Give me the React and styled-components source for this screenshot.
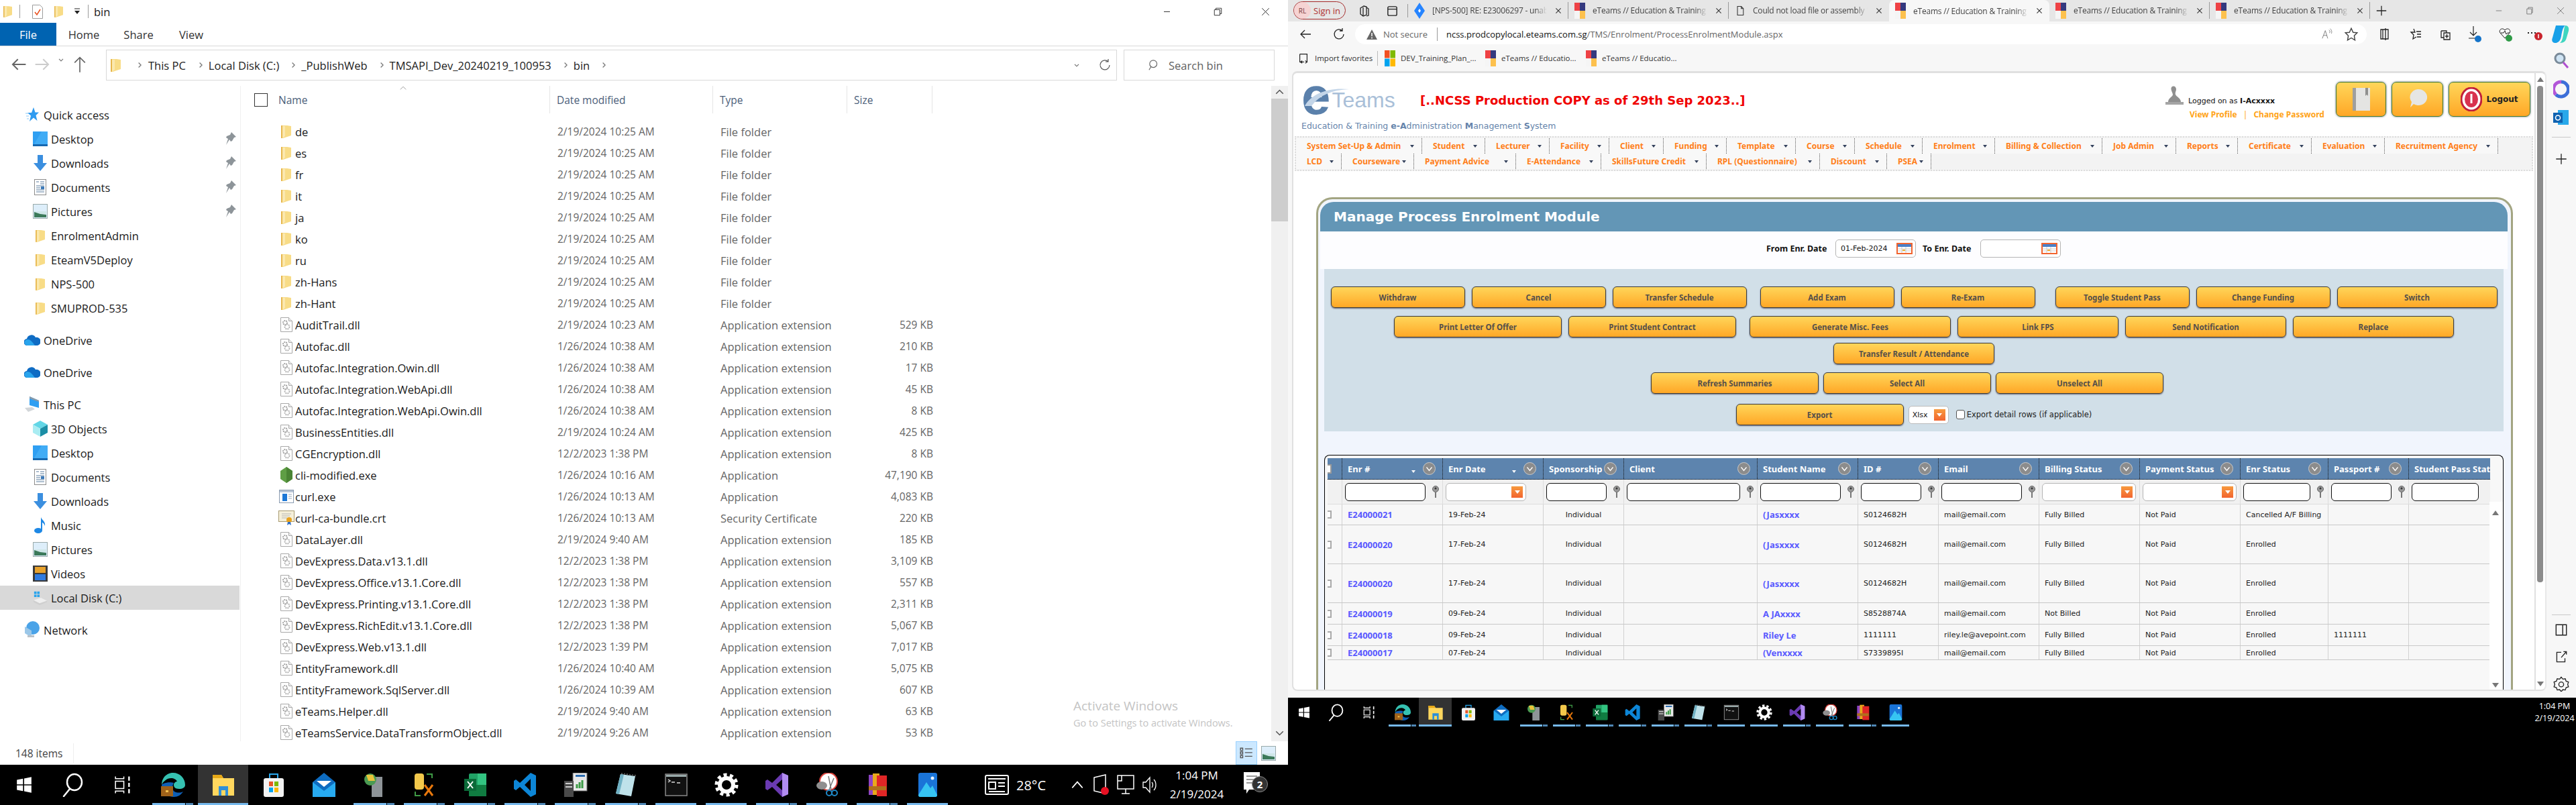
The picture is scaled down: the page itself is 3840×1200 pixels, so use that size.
import React from "react";
import styled, { createGlobalStyle } from "styled-components";

const UI = '"Open Sans", "Noto Sans", sans-serif';
const WEB = '"DejaVu Sans", "Liberation Sans", sans-serif';
const WEB_BOLD = '"Noto Sans", "DejaVu Sans", sans-serif';

const Global = createGlobalStyle`
  html, body { margin: 0; padding: 0; background: #000; }
  * { box-sizing: border-box; }
  body { font-family: ${UI}; }
`;

/* ---------- small drawings ---------- */

const Folder = ({ w = 15, h = 20 }) => (
  <svg width={w} height={h} viewBox="0 0 15 20">
    <path d="M0 1l9 0 6 1v14L3 20H0z" fill="#f8dc87" />
    <path d="M0 1h2v19H0z" fill="#e7b64c" />
    <path d="M2 2h4v15l-4 3z" fill="#fbe8ae" />
  </svg>
);

const Dll = () => (
  <svg width="18" height="22" viewBox="0 0 18 22">
    <path d="M.5.5h12l5 5v16H.5z" fill="#fff" stroke="#a8a8a8" />
    <path d="M12.500.5v5h5" fill="#eee" stroke="#a8a8a8" />
    <circle cx="7" cy="8" r="3" fill="none" stroke="#a3a3a3" strokeWidth="2" strokeDasharray="2 1" />
    <circle cx="10" cy="14" r="3.500" fill="none" stroke="#b3b3b3" strokeWidth="2" strokeDasharray="2 1" />
  </svg>
);

const FileGlyph = ({ kind }) => {
  if (kind === "folder") return <Folder />;
  if (kind === "dll") return <Dll />;
  if (kind === "node")
    return (
      <svg width="18" height="24" viewBox="0 0 18 24">
        <path d="M9 0l9 6v12l-9 6-9-6V6z" fill="#5f9e45" />
        <path d="M9 0l9 6v12l-9 6z" fill="#4a8434" />
      </svg>
    );
  if (kind === "exe")
    return (
      <svg width="22" height="20" viewBox="0 0 22 20">
        <rect x=".5" y=".5" width="21" height="19" fill="#fff" stroke="#8a9bb0" />
        <rect x="1" y="1" width="20" height="3" fill="#b9c6d6" />
        <rect x="5" y="6" width="7" height="11" fill="#1e78d6" />
        <path d="M14 7h5M14 10h5M14 13h5" stroke="#9aa8b8" />
      </svg>
    );
  return (
    <svg width="24" height="24" viewBox="0 0 24 24">
      <rect x=".5" y="1.500" width="23" height="16" fill="#f5efd9" stroke="#a89b72" />
      <path d="M5 6h14M5 9h12M5 12h8" stroke="#b6b6b6" />
      <circle cx="16" cy="15" r="4" fill="#e9a21c" />
      <path d="M14 18l-1 5 3-2 3 2-1-5z" fill="#2f6fc7" />
    </svg>
  );
};

const NavGlyph = ({ kind }) => {
  switch (kind) {
    case "star":
      return (
        <svg width="20" height="22" viewBox="0 0 20 22">
          <path d="M12 0l2.500 7.500H20l-4.500 4.500 2 8-5.500-4.500L6 21l2-8.500L3 8h6z" fill="#2f9bf0" />
          <path d="M0 9h5M1 13h4M2 17h3" stroke="#8cc9f6" />
        </svg>
      );
    case "desktop":
      return (
        <svg width="22" height="22" viewBox="0 0 22 22">
          <rect width="22" height="22" fill="#2f9ff2" />
          <path d="M0 22L13 0h9v19H0z" fill="#49b2f6" opacity=".7" />
          <rect y="19" width="22" height="3" fill="#1668b0" />
        </svg>
      );
    case "down":
      return (
        <svg width="20" height="24" viewBox="0 0 20 24">
          <path d="M6 0h8v12h6L10 24 0 12h6z" fill="#3b8fdf" />
        </svg>
      );
    case "doc":
      return (
        <svg width="18" height="24" viewBox="0 0 18 24">
          <rect x=".5" y=".5" width="17" height="23" fill="#fff" stroke="#8c8c8c" />
          <path d="M3 4h4M9 4h6M9 7h6M3 10h12M3 13h6M3 16h12M3 19h12" stroke="#5a7d9e" />
          <rect x="10" y="11" width="5" height="4" fill="#3b79b8" />
        </svg>
      );
    case "pic":
      return (
        <svg width="22" height="22" viewBox="0 0 22 22">
          <rect x=".5" y=".5" width="21" height="21" fill="#ddeefa" stroke="#9aa" />
          <path d="M2 11h18v4H2z" fill="#cfe7e8" />
          <path d="M2 12l9 3 9 1v4H2z" fill="#3c7a5a" />
        </svg>
      );
    case "folder":
      return <Folder w={14} h={21} />;
    case "cloud":
      return (
        <svg width="24" height="16" viewBox="0 0 24 16">
          <path d="M5 16a5 5 0 0 1-1-10 7 7 0 0 1 13-2 6 6 0 0 1 3 12z" fill="#0f6cc4" />
          <path d="M5 16a4.500 4.500 0 0 1 0-9c4 0 6 3 8 5l3 4z" fill="#29a4ec" />
        </svg>
      );
    case "pc":
      return (
        <svg width="24" height="24" viewBox="0 0 24 24">
          <path d="M8 0l14 6v11L8 13z" fill="#2f9ff2" />
          <path d="M8 0l14 6v2L8 3z" fill="#8a9aa8" />
          <path d="M1 17l11-1 4 3-10 4z" fill="#d2d6d9" />
        </svg>
      );
    case "cube":
      return (
        <svg width="22" height="24" viewBox="0 0 22 24">
          <path d="M11 0l11 6-11 6L0 6z" fill="#62d6e6" />
          <path d="M0 6l11 6v12L0 18z" fill="#a9ecf2" />
          <path d="M22 6l-11 6v12l11-6z" fill="#1b8ea6" />
        </svg>
      );
    case "music":
      return (
        <svg width="18" height="24" viewBox="0 0 18 24">
          <ellipse cx="6" cy="20" rx="6" ry="4" fill="#1e88e5" />
          <path d="M10 20V0c2 5 7 6 6 13-1-3-3-5-4-5v12z" fill="#1e88e5" />
        </svg>
      );
    case "video":
      return (
        <svg width="22" height="24" viewBox="0 0 22 24">
          <rect width="22" height="24" fill="#3a3a3a" />
          <rect x="3" y="2" width="16" height="9" fill="#e8a22c" />
          <rect x="3" y="13" width="16" height="9" fill="#2f7be0" />
        </svg>
      );
    case "disk":
      return (
        <svg width="24" height="24" viewBox="0 0 24 24">
          <path d="M2 2h4v4H2zM7 2h4v4H7zM2 7h4v4H2zM7 7h4v4H7z" fill="#29a4ec" />
          <path d="M1 16l12-4 10 5v2l-12 5-10-5z" fill="#cfcfcf" />
          <path d="M1 16l12-4 10 5-12 4z" fill="#efefef" />
        </svg>
      );
    default:
      return (
        <svg width="22" height="26" viewBox="0 0 22 26">
          <circle cx="12" cy="10" r="10" fill="#4aa3e8" />
          <path d="M0 8l10 6v10L0 18z" fill="#9bc7e8" />
          <path d="M4 21h10v3H4z" fill="#b9c2c9" />
        </svg>
      );
  }
};

const Pin = () => (
  <svg width="16" height="20" viewBox="0 0 16 20">
    <path d="M9 0l7 7-3 1-3 5-2 1-2-3-5 8 3-9-3-2 1-2 5-2z" fill="#8d9499" />
  </svg>
);

const AppIcon = ({ name, size }) => {
  const p = { width: size, height: size, viewBox: "0 0 36 36" };
  switch (name) {
    case "start":
      return (
        <svg {...p}>
          <path d="M5 9l11-2v10H5zM18 6.500L31 4v13H18zM5 19h11v10L5 27zM18 19h13v13l-13-2.500z" fill="#fff" />
        </svg>
      );
    case "search":
      return (
        <svg {...p} fill="none" stroke="#fff" strokeWidth="2.500">
          <ellipse cx="20" cy="14" rx="11" ry="12" />
          <path d="M13 24L4 35" strokeLinecap="round" />
        </svg>
      );
    case "task":
      return (
        <svg {...p} fill="none" stroke="#fff" strokeWidth="2">
          <path d="M4 2v4h16V2M4 34v-4h16v4" />
          <rect x="4" y="11" width="16" height="14" />
          <path d="M30 2v34" strokeDasharray="8 4" strokeWidth="3" />
        </svg>
      );
    case "edge":
      return (
        <svg {...p}>
          <path d="M18 0c10 0 18 8 18 18 0 4-4 6-9 6-6 0-8-3-8-6s3-5 5-5c-1-3-5-5-9-5C9 8 3 13 1 18 1 8 8 0 18 0z" fill="#35c1b1" />
          <path d="M1 18c0 10 8 18 18 18 6 0 11-3 14-8-4 2-9 2-13 0-4-3-3-10-1-13-6-2-16 0-18 3z" fill="#0f5fb5" />
          <rect x="0" y="20" width="18" height="15" fill="#a0621a" />
          <rect x="7" y="26" width="4" height="3" fill="#f4c04e" />
        </svg>
      );
    case "explorer":
      return (
        <svg {...p}>
          <path d="M2 3h13l3 5h16v26H2z" fill="#ffd75e" />
          <path d="M2 3h13l3 5H2z" fill="#e6a817" />
          <path d="M11 34V20h14v14h-4v-8h-6v8z" fill="#2f8fd8" />
        </svg>
      );
    case "store":
      return (
        <svg {...p}>
          <path d="M12 8V2h12v6" fill="none" stroke="#2aa8ee" strokeWidth="2" />
          <rect x="3" y="8" width="30" height="28" rx="3" fill="#f2f2f2" />
          <rect x="11" y="13" width="6" height="7" fill="#e8562a" />
          <rect x="19" y="13" width="6" height="7" fill="#7fb900" />
          <rect x="11" y="22" width="6" height="7" fill="#00a4ef" />
          <rect x="19" y="22" width="6" height="7" fill="#ffb900" />
        </svg>
      );
    case "mail":
      return (
        <svg {...p}>
          <path d="M18 0l17 14v22H1V14z" fill="#0e6cc0" />
          <path d="M1 14l17 13 17-13v22H1z" fill="#27aaf0" />
          <path d="M7 12h22L18 21z" fill="#fff" />
        </svg>
      );
    case "iis":
      return (
        <svg {...p}>
          <rect x="14" y="6" width="16" height="30" fill="#8e9498" />
          <circle cx="12" cy="10" r="9" fill="#4a9a52" />
          <path d="M6 3h10l3 9H9z" fill="#e8c43a" />
        </svg>
      );
    case "sql":
      return (
        <svg {...p}>
          <rect x="3" y="1" width="14" height="24" rx="4" fill="#f2c84b" />
          <path d="M21 2h8v6M4 28v6h8" fill="none" stroke="#3f9a46" strokeWidth="2" />
          <path d="M18 18l12 16M30 18L18 34" stroke="#e8780c" strokeWidth="3" />
        </svg>
      );
    case "excel":
      return (
        <svg {...p}>
          <rect x="9" y="1" width="26" height="34" rx="2" fill="#21a366" />
          <rect x="22" y="1" width="13" height="17" fill="#33c481" />
          <rect x="9" y="18" width="26" height="17" fill="#107c41" />
          <rect x="2" y="9" width="18" height="18" fill="#0b6a38" />
          <path d="M7 13l8 10M15 13L7 23" stroke="#fff" strokeWidth="2" />
        </svg>
      );
    case "code":
      return (
        <svg {...p}>
          <path d="M26 0l8 4v28l-8 4-16-15-6 5-3-2v-12l3-2 6 5zM26 9l-9 9 9 9z" fill="#0d86d7" />
        </svg>
      );
    case "perf":
      return (
        <svg {...p}>
          <rect x="14" y="0" width="21" height="27" fill="#e8e8e8" stroke="#666" />
          <rect x="18" y="3" width="14" height="3" fill="#2b6cb0" />
          <path d="M20 23v-6M24 23v-9M28 23v-12" stroke="#3d9a46" strokeWidth="3" />
          <rect x="1" y="12" width="14" height="24" fill="#4a4a4a" />
          <rect x="3" y="15" width="10" height="2" fill="#ccc" />
          <rect x="3" y="20" width="10" height="2" fill="#ccc" />
        </svg>
      );
    case "note":
      return (
        <svg {...p}>
          <path d="M10 2l22 3-6 30L3 31z" fill="#bfe2ea" />
          <path d="M3 31L10 2l5 .7-7 29z" fill="#6fb1c4" />
          <path d="M11 1l22 3" stroke="#555" strokeWidth="2" strokeDasharray="2 2" />
        </svg>
      );
    case "cmd":
      return (
        <svg {...p}>
          <rect x="2" y="2" width="32" height="32" fill="#111" stroke="#888" strokeWidth="1.500" />
          <rect x="3" y="3" width="30" height="3" fill="#9aa" />
          <path d="M6 10l3 2-3 2M11 14h5M19 15h5" stroke="#ddd" strokeWidth="1.500" fill="none" />
        </svg>
      );
    case "gear":
      return (
        <svg {...p}>
          <circle cx="18" cy="18" r="10" fill="none" stroke="#fff" strokeWidth="6" />
          <circle cx="18" cy="18" r="15" fill="none" stroke="#fff" strokeWidth="5" strokeDasharray="5 4.400" />
        </svg>
      );
    case "vs":
      return (
        <svg {...p}>
          <path d="M26 0l9 4v28l-9 4-15-15-7 5-3-2V12l3-2 7 5z" fill="#6a3ab2" />
          <path d="M26 0l9 4v28l-9 4z" fill="#b18cf0" />
          <path d="M26 10l-9 8 9 8z" fill="#000" />
        </svg>
      );
    case "snip":
      return (
        <svg {...p}>
          <circle cx="20" cy="13" r="13" fill="#fff" stroke="#d8413a" strokeWidth="2" />
          <ellipse cx="10" cy="19" rx="8" ry="6" fill="#8f8f8f" />
          <path d="M20 5l4 20M28 8L21 25" stroke="#777" strokeWidth="1.500" />
          <circle cx="21" cy="30" r="4" fill="none" stroke="#1e88c7" strokeWidth="2" />
          <circle cx="29" cy="30" r="4" fill="none" stroke="#1e88c7" strokeWidth="2" />
        </svg>
      );
    case "rar":
      return (
        <svg {...p}>
          <rect x="5" y="3" width="9" height="30" fill="#8e44c4" />
          <rect x="11" y="1" width="10" height="32" fill="#e8a81c" />
          <rect x="17" y="4" width="15" height="31" fill="#e02626" />
          <rect x="5" y="20" width="26" height="6" fill="#b0701c" />
        </svg>
      );
    case "photos":
      return (
        <svg {...p}>
          <rect x="4" y="0" width="28" height="36" rx="3" fill="#1a74d8" />
          <path d="M4 33L16 14l6 9 3-4 7 14v0a3 3 0 0 1-3 3H7a3 3 0 0 1-3-3z" fill="#36c4f2" />
          <circle cx="25" cy="8" r="2.500" fill="#e8f4ff" />
        </svg>
      );
    default:
      return null;
  }
};

const Favicon = () => (
  <svg width="16" height="24" viewBox="0 0 16 24">
    <rect width="8" height="12" fill="#ee4245" />
    <rect x="8" width="8" height="12" fill="#34397f" />
    <rect y="12" width="8" height="12" fill="#f5f5f5" />
    <rect x="8" y="12" width="8" height="12" fill="#fdc14e" />
  </svg>
);

const Line = ({ d, size = 20, w = 1.300, c = "#222" }) => (
  <svg width={size} height={size} viewBox="0 0 20 20" fill="none" stroke={c} strokeWidth={w}>
    <path d={d} />
  </svg>
);

/* ---------- page shell ---------- */

const Desktop = styled.div`
  display: flex;
  width: 3840px;
  height: 1200px;
  overflow: hidden;
  background: #000;
`;

const Half = styled.div`
  display: flex;
  flex-direction: column;
  width: 1920px;
  height: 1200px;
  flex: none;
`;

/* ---------- taskbar ---------- */

const Taskbar = styled.div`
  display: flex;
  flex: none;
  height: ${(p) => p.$h}px;
  background: #000;
  color: #fff;
`;

const Slot = styled.div`
  position: relative;
  display: flex;
  align-items: center;
  justify-content: center;
  flex: none;
  width: ${(p) => p.$w}px;
  background: ${(p) => (p.$active ? "#333" : "transparent")};
`;

const Running = styled.span`
  position: absolute;
  bottom: 0;
  left: ${(p) => (p.$active ? 0 : p.$inset)}px;
  right: ${(p) => (p.$active ? 0 : p.$inset)}px;
  height: 3px;
  background: ${(p) =>
    p.$split
      ? "linear-gradient(90deg, #76b9ed 0 80%, #000 80% 82%, #4e86b4 82%)"
      : "#76b9ed"};
`;

const Tray = styled.div`
  display: flex;
  align-items: center;
  margin-left: ${(p) => (p.$ml ? `${p.$ml}px` : "auto")};
`;

const Temp = styled.div`
  width: 84px;
  padding-left: 11px;
  font-size: 20px;
`;

const Clock = styled.div`
  display: flex;
  flex-direction: column;
  align-items: center;
  flex: none;
  width: ${(p) => p.$w}px;
  gap: ${(p) => p.$gap}px;
  font-size: ${(p) => p.$size}px;
  line-height: 1.2;
`;

const Badge = styled.span`
  position: absolute;
  right: 6px;
  bottom: 8px;
  display: flex;
  align-items: center;
  justify-content: center;
  width: 24px;
  height: 24px;
  border-radius: 50%;
  background: #333;
  border: 1px solid #888;
  font-size: 15px;
  font-weight: 700;
`;

const apps = [
  ["edge", 2], ["explorer", 3], ["store", 0], ["mail", 0], ["iis", 2], ["sql", 2], ["excel", 2],
  ["code", 2], ["perf", 2], ["note", 2], ["cmd", 1], ["gear", 1], ["vs", 2], ["snip", 1], ["rar", 2], ["photos", 1],
];

const AppSlots = ({ slot, icon, inset }) =>
  apps.map(([name, run]) => (
    <Slot key={name} $w={slot} $active={run === 3}>
      <AppIcon name={name} size={icon} />
      {run > 0 && <Running $inset={inset} $split={run === 2} $active={run === 3} />}
    </Slot>
  ));

/* ---------- explorer ---------- */

const Explorer = styled.div`
  display: flex;
  flex-direction: column;
  flex: none;
  height: 1140px;
  background: #fff;
  color: #1a1a1a;
  font-size: 16.500px;
`;

const TitleBar = styled.div`
  position: relative;
  display: flex;
  align-items: center;
  height: 34px;
  padding-left: 5px;
`;

const TitleSep = styled.span`
  width: 1px;
  height: 20px;
  background: #9c9c9c;
  margin: 0 ${(p) => p.$r || 10}px 0 ${(p) => p.$l || 12}px;
`;

const TitleGap = styled.span`
  flex: none;
  width: ${(p) => p.$w}px;
`;

const WindowButtons = styled.div`
  display: flex;
  margin-left: auto;
  height: 100%;
`;

const WinButton = styled.div`
  display: flex;
  align-items: center;
  justify-content: center;
  width: ${(p) => p.$w}px;
  height: 100%;
`;

const RibbonTabs = styled.div`
  display: flex;
  height: 34px;
`;

const RibbonTab = styled.div`
  display: flex;
  align-items: center;
  justify-content: center;
  width: ${(p) => p.$w}px;
  background: ${(p) => (p.$file ? "#0063b1" : "transparent")};
  color: ${(p) => (p.$file ? "#fff" : "#333")};
`;

const AddressRow = styled.div`
  display: flex;
  height: 60px;
  border-top: 1.500px solid #d9d9d9;
  padding-top: 5px;
`;

const NavArrows = styled.div`
  display: flex;
  align-items: flex-start;
  flex: none;
  width: 158px;
  padding: 9px 0 0 15px;
  gap: 9px;
`;

const AddressBox = styled.div`
  display: flex;
  align-items: center;
  flex: none;
  width: ${(p) => p.$w}px;
  height: 46px;
  margin-right: ${(p) => p.$mr || 0}px;
  border: 1.500px solid #d9d9d9;
  padding-left: 6px;
  color: #222;
`;

const AddressEnd = styled.div`
  display: flex;
  align-items: center;
  gap: 26px;
  margin-left: auto;
  padding-right: 7px;
`;

const Crumb = styled.span`
  margin-left: ${(p) => p.$ml}px;
  white-space: nowrap;
`;

const Chevron = styled.span`
  margin-left: ${(p) => p.$ml || 0}px;
  display: flex;
`;

const SearchHint = styled.span`
  margin-left: 12px;
  color: #5f5f5f;
`;

const Panes = styled.div`
  display: flex;
  flex: 1;
  min-height: 0;
`;

const NavPane = styled.div`
  flex: none;
  width: 359px;
  padding-top: 25px;
  border-right: 1.500px solid #f0f0f0;
`;

const NavRow = styled.div`
  display: flex;
  align-items: center;
  width: 357px;
  height: 36px;
  margin-top: ${(p) => (p.$top ? 12 : 0)}px;
  padding-left: ${(p) => (p.$root ? 36 : 49)}px;
  background: ${(p) => (p.$selected ? "#d9d9d9" : "transparent")};
`;

const NavIcon = styled.span`
  display: flex;
  justify-content: center;
  flex: none;
  width: ${(p) => (p.$root ? 24 : 22)}px;
  margin-right: 5px;
`;

const NavPin = styled.span`
  display: flex;
  margin-left: auto;
  margin-right: 5px;
`;

const List = styled.div`
  position: relative;
  flex: 1;
`;

const HeaderRow = styled.div`
  display: grid;
  grid-template-columns: 461px 243px 200px 127px;
  height: 41px;
  color: #4c607a;
  font-size: 15.500px;
`;

const HeaderCell = styled.div`
  position: relative;
  display: flex;
  align-items: center;
  padding-left: ${(p) => p.$pl || 10}px;
  border-right: 1px solid #e5e5e5;
`;

const Check = styled.span`
  width: 20px;
  height: 20px;
  border: 1.500px solid #333;
  margin-right: 16px;
`;

const SortMark = styled.span`
  position: absolute;
  top: -3px;
  left: 235px;
  display: flex;
`;

const Rows = styled.div`
  padding-top: 11px;
`;

const FileRow = styled.div`
  display: grid;
  grid-template-columns: 472px 243px 200px 117px;
  align-items: center;
  height: 32px;
  white-space: nowrap;
`;

const NameCell = styled.div`
  display: flex;
  align-items: center;
  padding-left: 56px;
`;

const NameIcon = styled.span`
  display: flex;
  justify-content: center;
  width: 27px;
  margin-left: -2px;
`;

const Muted = styled.div`
  color: #666;
  text-align: ${(p) => p.$align || "left"};
  font-size: ${(p) => p.$size || 16.5}px;
`;

const ScrollTrack = styled.div`
  position: absolute;
  top: 0;
  right: 0;
  bottom: 0;
  width: 25px;
  background: #f0f0f0;
`;

const ScrollThumb = styled.div`
  position: absolute;
  top: 19px;
  left: 0;
  right: 0;
  height: 183px;
  background: #cdcdcd;
`;

const ScrollArrow = styled.span`
  position: absolute;
  left: 5px;
  ${(p) => (p.$down ? "bottom: 5px;" : "top: 2px;")}
  display: flex;
`;

const Watermark = styled.div`
  position: absolute;
  left: 1241px;
  bottom: 16px;
  color: #c4c4c4;
  font-size: 14.500px;
  line-height: 23px;
  white-space: nowrap;
`;

const WatermarkTitle = styled.div`
  font-size: 19px;
  line-height: 28px;
`;

const StatusBar = styled.div`
  display: flex;
  align-items: center;
  flex: none;
  height: 35px;
  padding-left: 23px;
  color: #444;
  font-size: 15.500px;
`;

const StatusSep = styled.span`
  width: 1px;
  height: 30px;
  margin-left: 15px;
  background: #eee;
`;

const ViewToggle = styled.div`
  display: flex;
  align-items: center;
  justify-content: center;
  width: 32px;
  height: 35px;
  margin-left: ${(p) => p.$ml || 0}px;
  background: ${(p) => (p.$on ? "#cce8ff" : "transparent")};
  border: ${(p) => (p.$on ? "1px solid #99d1ff" : "none")};
`;

/* ---------- browser ---------- */

const Browser = styled.div`
  display: flex;
  flex-direction: column;
  flex: none;
  height: 1040px;
  background: #f7f7f7;
  color: #333;
  font-size: 14px;
`;

const TabStrip = styled.div`
  display: flex;
  align-items: stretch;
  flex: none;
  height: 32px;
  background: #e6e6e6;
`;

const Profile = styled.div`
  display: flex;
  align-items: center;
  flex: none;
  width: 78px;
  height: 27px;
  margin: 2px 8px 0;
  border: 1.500px solid #a52b2b;
  border-radius: 14px;
  color: #b03030;
  font-size: 13px;
`;

const Avatar = styled.span`
  display: flex;
  align-items: center;
  justify-content: center;
  width: 25px;
  height: 25px;
  margin-right: 4px;
  border-radius: 50%;
  background: #f6d3d3;
  font-size: 10px;
  color: #7a3a3a;
`;

const StripIcon = styled.div`
  display: flex;
  align-items: center;
  justify-content: center;
  flex: none;
  width: ${(p) => p.$w}px;
`;

const StripSep = styled.span`
  width: 1px;
  height: 20px;
  background: #999;
`;

const Tab = styled.div`
  display: flex;
  align-items: center;
  flex: none;
  width: 239px;
  padding: 0 8px 0 9px;
  gap: 11px;
  border-right: 1px solid ${(p) => (p.$plain ? "transparent" : "#9a9a9a")};
  background: ${(p) => (p.$active ? "#f7f7f7" : "transparent")};
  border-radius: ${(p) => (p.$active ? "8px 8px 0 0" : "0")};
  margin-top: ${(p) => (p.$active ? 0 : 3)}px;
  margin-bottom: ${(p) => (p.$active ? 0 : 4)}px;
`;

const TabIcon = styled.span`
  display: flex;
  justify-content: center;
  flex: none;
  width: 16px;
`;

const TabTitle = styled.span`
  flex: 1;
  overflow: hidden;
  white-space: nowrap;
  font-size: 12px;
  letter-spacing: -0.2px;
  color: #444;
  -webkit-mask-image: linear-gradient(90deg, #000 90%, transparent);
  mask-image: linear-gradient(90deg, #000 90%, transparent);
`;

const Toolbar = styled.div`
  display: flex;
  align-items: center;
  flex: none;
  height: 38px;
`;

const ToolSlot = styled.div`
  display: flex;
  align-items: center;
  justify-content: center;
  flex: none;
  width: ${(p) => p.$w}px;
`;

const Omnibox = styled.div`
  display: flex;
  align-items: center;
  flex: none;
  width: 1508px;
  height: 30px;
  margin-right: 6px;
  padding: 0 12px 0 17px;
  background: #fff;
  border-radius: 15px;
  font-size: 13px;
`;

const NotSecure = styled.span`
  margin-left: 9px;
  color: #666;
`;

const OmniSep = styled.span`
  width: 1px;
  height: 20px;
  margin: 0 13px 0 14px;
  background: #999;
`;

const Host = styled.span`
  color: #111;
  white-space: nowrap;
`;

const PathPart = styled.span`
  color: #666;
  white-space: nowrap;
`;

const OmniEnd = styled.div`
  display: flex;
  align-items: center;
  margin-left: auto;
  gap: 16px;
`;

const BrowserBody = styled.div`
  display: flex;
  flex: 1;
  min-height: 0;
`;

const BrowserMain = styled.div`
  display: flex;
  flex-direction: column;
  flex: none;
  width: 1876px;
`;

const FavBar = styled.div`
  display: flex;
  align-items: center;
  flex: none;
  height: 33px;
  padding-left: 14px;
  font-size: 11.500px;
  color: #333;
`;

const FavItem = styled.span`
  display: flex;
  align-items: center;
  flex: none;
  gap: 8px;
  width: ${(p) => p.$w}px;
  white-space: nowrap;
`;

const FavSep = styled.span`
  width: 1px;
  height: 22px;
  margin-right: 10px;
  background: #bbb;
`;

const SideRail = styled.div`
  display: flex;
  flex-direction: column;
  align-items: center;
  flex: none;
  width: 44px;
`;

const RailSlot = styled.div`
  display: flex;
  align-items: center;
  justify-content: center;
  height: ${(p) => p.$h || 40}px;
`;

const RailSep = styled.span`
  width: 28px;
  height: 1px;
  margin: ${(p) => p.$m};
  background: #c8c8c8;
`;

const PageShell = styled.div`
  display: flex;
  margin: 3px 0 0 6px;
  height: 924px;
  background: #fff;
  border-top: 3px solid #e0e0e0;
  border-bottom: 2px solid #e0e0e0;
  border-left: 2px solid #e0e0e0;
  border-right: 2px solid #e8e8e8;
  border-radius: 8px;
  overflow: hidden;
`;

const Page = styled.div`
  flex: none;
  width: 1852px;
  height: 100%;
  padding: 0 0 0 2px;
  overflow: hidden;
  font-family: ${WEB};
  border-right: 2px solid #e0e0e0;
`;

const PageScroll = styled.div`
  position: relative;
  flex: 1;
`;

const PageThumb = styled.div`
  position: absolute;
  top: 19px;
  left: 2px;
  width: 9px;
  height: 740px;
  border-radius: 4px;
  background: #8c8c8c;
`;

const Tri = styled.span`
  position: absolute;
  left: 2px;
  ${(p) => (p.$down ? "bottom: 5px;" : "top: 6px;")}
  width: 0;
  height: 0;
  border-left: 5px solid transparent;
  border-right: 5px solid transparent;
  ${(p) => (p.$down ? "border-top: 7px solid #777;" : "border-bottom: 7px solid #777;")}
`;

const PageHead = styled.div`
  display: flex;
  height: 94px;
`;

const Brand = styled.div`
  display: flex;
  flex-direction: column;
  padding: 17px 0 0 10px;
`;

const BrandTop = styled.div`
  display: flex;
  align-items: center;
  height: 46px;
`;

const Logo = styled.div`
  position: relative;
  display: flex;
  align-items: center;
  flex: none;
  width: 177px;
  height: 46px;
`;

const LogoE = styled.span`
  font-family: "Liberation Sans", sans-serif;
  font-weight: 700;
  font-size: 78px;
  line-height: 46px;
  color: #5a80ab;
  transform: translateY(-6px);
`;

const LogoSwoosh = styled.svg`
  position: absolute;
  left: 5px;
  top: 4px;
`;

const LogoRest = styled.span`
  margin-left: 2px;
  font-family: "Liberation Sans", sans-serif;
  font-size: 32px;
  color: #a9bfd8;
`;

const Headline = styled.div`
  color: #f00000;
  font-weight: 700;
  font-size: 18px;
  white-space: nowrap;
`;

const Tagline = styled.div`
  margin-top: 8px;
  color: #6584ab;
  font-size: 12.500px;
  white-space: nowrap;
`;

const UserArea = styled.div`
  display: flex;
  margin-left: auto;
  padding: 13px 6px 0 0;
`;

const UserInfo = styled.div`
  display: flex;
  flex-direction: column;
  flex: none;
  width: 241px;
  margin-right: 5px;
  padding-top: 4px;
  font-size: 11px;
  color: #111;
`;

const UserLine = styled.div`
  display: flex;
  align-items: flex-end;
  gap: 7px;
  height: 31px;
`;

const UserLinks = styled.div`
  display: flex;
  gap: 9px;
  margin: 5px 0 0 36px;
  color: #ffa318;
  font-family: ${WEB_BOLD};
  font-weight: 700;
  font-size: 12px;
  white-space: nowrap;
`;

const LinkBar = styled.span`
  font-weight: 400;
`;

const TopButton = styled.div`
  display: flex;
  align-items: center;
  justify-content: center;
  gap: 6px;
  width: ${(p) => p.$w}px;
  height: 52px;
  margin-left: 8px;
  border: 1px solid #3d7a3a;
  border-radius: 7px;
  background: linear-gradient(#ffd65a, #ffa726);
  box-shadow: 0 0 3px #777;
  font-family: ${WEB};
  font-size: 12px;
  font-weight: 700;
  color: #222;
`;

const MainMenu = styled.div`
  height: 52px;
  margin-right: 2px;
  border: 2px dotted #ddd;
  background: #f3f3f3;
  padding-top: 1px;
`;

const MenuRow = styled.div`
  display: flex;
  height: 23px;
`;

const MenuItem = styled.div`
  display: flex;
  align-items: center;
  flex: none;
  width: ${(p) => p.$w}px;
  padding-left: 16px;
  border-right: 1px dotted #555;
  background: #f8f8f8;
  color: #ff7f1a;
  font-family: ${WEB_BOLD};
  font-weight: 700;
  font-size: 12px;
  white-space: nowrap;
`;

const MenuArrow = styled.span`
  margin-left: auto;
  margin-right: 11px;
  width: 0;
  height: 0;
  border-left: 3px solid transparent;
  border-right: 3px solid transparent;
  border-top: 4px solid #33415c;
`;

const Frame = styled.div`
  margin: 39px 0 0 32px;
  width: 1784px;
  height: 740px;
  padding: 4px 5px 0 3px;
  border: 3px solid #a3a582;
  border-bottom: none;
  border-radius: 24px 24px 0 0;
  background: #f1f5fd;
`;

const FrameTitle = styled.div`
  display: flex;
  align-items: center;
  height: 44px;
  padding-left: 20px;
  border-radius: 20px 20px 0 0;
  background: #6396b6;
  color: #fff;
  font-size: 20px;
  font-weight: 700;
`;

const DateRow = styled.div`
  display: flex;
  align-items: flex-start;
  height: 56px;
  padding: 12px 0 0 665px;
  background: #fdfdff;
  font-family: ${WEB_BOLD};
  font-weight: 700;
  font-size: 12.500px;
  color: #111;
`;

const DateLabel = styled.span`
  line-height: 27px;
  margin: 0 10px 0 ${(p) => p.$ml || 0}px;
  width: ${(p) => p.$w}px;
  white-space: nowrap;
`;

const DateInput = styled.div`
  display: flex;
  align-items: center;
  justify-content: space-between;
  width: 120px;
  height: 27px;
  padding: 0 4px 0 7px;
  border: 1px solid #b5b5b5;
  border-radius: 5px;
  background: #fff;
  font-family: ${WEB};
  font-weight: 400;
  font-size: 11px;
`;

const ButtonBox = styled.div`
  height: 242px;
  margin: 0 6px;
  padding-top: 26px;
  background: #d1dfe8;
`;

const ButtonRow = styled.div`
  display: flex;
  justify-content: center;
  align-items: center;
  height: 32px;
  gap: ${(p) => p.$gap}px;
  margin-top: ${(p) => p.$top || 0}px;
  padding-left: ${(p) => p.$pl || 0}px;
  padding-right: ${(p) => p.$pr || 0}px;
`;

const Action = styled.div`
  display: flex;
  align-items: center;
  justify-content: center;
  flex: none;
  width: ${(p) => p.$w}px;
  height: 32px;
  margin-left: ${(p) => p.$ml || 0}px;
  border: 1px solid #3b3b3b;
  border-radius: 6px;
  background: linear-gradient(#ffd65a, #ffa726);
  box-shadow: 0 1px 2px #667;
  color: #55504a;
  font-family: ${WEB_BOLD};
  font-weight: 700;
  font-size: 11.500px;
  white-space: nowrap;
`;

const FormatSelect = styled.div`
  display: flex;
  align-items: center;
  justify-content: space-between;
  flex: none;
  width: 60px;
  height: 27px;
  padding: 0 4px 0 5px;
  border: 1px solid #bbb;
  border-radius: 5px;
  background: #fff;
  font-size: 11px;
  color: #111;
`;

const OrangeDrop = styled.span`
  display: flex;
  align-items: center;
  justify-content: center;
  width: 17px;
  height: 17px;
  background: linear-gradient(#f79a3e, #f2642f);
`;

const DropMark = styled.span`
  width: 0;
  height: 0;
  border-left: 4px solid transparent;
  border-right: 4px solid transparent;
  border-top: 5px solid #fff;
`;

const ExportDetail = styled.label`
  display: flex;
  align-items: center;
  gap: 3px;
  margin-left: 4px;
  font-size: 11.500px;
  color: #222;
  white-space: nowrap;
`;

const TickBox = styled.span`
  width: 13px;
  height: 14px;
  border: 1px solid #555;
  border-radius: 3px;
  background: #fff;
`;

const GridFrame = styled.div`
  position: relative;
  height: 352px;
  margin: 35px 6px 0;
  padding: 4px 0 0 4px;
  border: 1px solid #000;
  border-bottom: none;
  border-radius: 8px 8px 0 0;
  background: #f8f8f8;
  overflow: hidden;
`;

const GridBody = styled.div`
  width: 1733px;
  overflow: hidden;
`;

const GRID_COLS = "21px 150px 150px 120px 199px 150px 120px 150px 150px 150px 131px 120px 122px";

const GridHead = styled.div`
  display: grid;
  grid-template-columns: ${GRID_COLS};
  height: 32px;
  background: #5d84ae;
  border-bottom: 1px dotted #111;
`;

const GridHeadCell = styled.div`
  position: relative;
  display: flex;
  align-items: center;
  padding-left: 8px;
  overflow: hidden;
  border-left: ${(p) => (p.$first ? "none" : "1px dotted #111")};
  color: #fff;
  font-family: ${WEB_BOLD};
  font-weight: 700;
  font-size: 13px;
  white-space: nowrap;
`;

const HeadTick = styled.span`
  width: 12px;
  height: 14px;
  margin-left: -14px;
  background: #fff;
  border: 2px solid #999;
`;

const HeadMenu = styled.span`
  position: absolute;
  right: 10px;
  top: 6px;
  display: flex;
`;

const HeadSort = styled.span`
  position: absolute;
  right: 40px;
  top: 18px;
  width: 0;
  height: 0;
  border-left: 3px solid transparent;
  border-right: 3px solid transparent;
  border-top: 4px solid #fff;
`;

const FilterRow = styled.div`
  display: grid;
  grid-template-columns: ${GRID_COLS};
  height: 37px;
  background: #f1f1f1;
  border-bottom: 1px solid #ddd;
`;

const FilterCell = styled.div`
  display: flex;
  align-items: center;
  gap: 10px;
  padding-left: 4px;
  overflow: hidden;
  border-left: ${(p) => (p.$first ? "none" : "1px solid #ddd")};
`;

const FilterInput = styled.div`
  display: flex;
  align-items: center;
  justify-content: flex-end;
  flex: none;
  width: ${(p) => p.$w}px;
  height: 27px;
  padding-right: 4px;
  border: 1px solid ${(p) => (p.$combo ? "#b5b5b5" : "#111")};
  border-radius: 6px;
  background: #fff;
`;

const DataRow = styled.div`
  display: grid;
  grid-template-columns: ${GRID_COLS};
  height: ${(p) => p.$h}px;
  border-bottom: 1.500px solid #c8c8c8;
  background: #f7f7f7;
  font-size: 11px;
  color: #222;
`;

const DataCell = styled.div`
  display: flex;
  align-items: center;
  justify-content: ${(p) => (p.$center ? "center" : "flex-start")};
  padding-left: ${(p) => (p.$center ? 0 : 8)}px;
  border-left: ${(p) => (p.$first ? "none" : "1px solid #d2d2d2")};
  white-space: nowrap;
  overflow: hidden;
`;

const RowTick = styled.span`
  flex: none;
  width: 12px;
  height: 12px;
  margin-left: -14px;
  background: #fff;
  border: 2px solid #aaa;
`;

const CellLink = styled.span`
  color: #5a5aff;
  font-family: ${WEB_BOLD};
  font-weight: 700;
  font-size: 13px;
`;

const GridScroll = styled.div`
  position: absolute;
  top: 69px;
  right: 0;
  bottom: 0;
  width: 20px;
  background: #fff;
`;

const GridTri = styled(Tri)`
  left: 4px;
  ${(p) => (p.$down ? "bottom: 5px;" : "top: 13px;")}
`;

/* ---------- data ---------- */

const quick = [
  ["star", "Quick access", true],
  ["desktop", "Desktop", false, true],
  ["down", "Downloads", false, true],
  ["doc", "Documents", false, true],
  ["pic", "Pictures", false, true],
  ["folder", "EnrolmentAdmin"],
  ["folder", "EteamV5Deploy"],
  ["folder", "NPS-500"],
  ["folder", "SMUPROD-535"],
];

const places = [
  ["desktop", "Desktop"],
  ["doc", "Documents"],
  ["down", "Downloads"],
  ["music", "Music"],
  ["pic", "Pictures"],
  ["video", "Videos"],
];

const ext = "Application extension";
const files = [
  ...["de", "es", "fr", "it", "ja", "ko", "ru", "zh-Hans", "zh-Hant"].map((n) => ["folder", n, "2/19/2024 10:25 AM", "File folder", ""]),
  ["dll", "AuditTrail.dll", "2/19/2024 10:23 AM", ext, "529 KB"],
  ["dll", "Autofac.dll", "1/26/2024 10:38 AM", ext, "210 KB"],
  ["dll", "Autofac.Integration.Owin.dll", "1/26/2024 10:38 AM", ext, "17 KB"],
  ["dll", "Autofac.Integration.WebApi.dll", "1/26/2024 10:38 AM", ext, "45 KB"],
  ["dll", "Autofac.Integration.WebApi.Owin.dll", "1/26/2024 10:38 AM", ext, "8 KB"],
  ["dll", "BusinessEntities.dll", "2/19/2024 10:24 AM", ext, "425 KB"],
  ["dll", "CGEncryption.dll", "12/2/2023 1:38 PM", ext, "8 KB"],
  ["node", "cli-modified.exe", "1/26/2024 10:16 AM", "Application", "47,190 KB"],
  ["exe", "curl.exe", "1/26/2024 10:13 AM", "Application", "4,083 KB"],
  ["crt", "curl-ca-bundle.crt", "1/26/2024 10:13 AM", "Security Certificate", "220 KB"],
  ["dll", "DataLayer.dll", "2/19/2024 9:40 AM", ext, "185 KB"],
  ["dll", "DevExpress.Data.v13.1.dll", "12/2/2023 1:38 PM", ext, "3,109 KB"],
  ["dll", "DevExpress.Office.v13.1.Core.dll", "12/2/2023 1:38 PM", ext, "557 KB"],
  ["dll", "DevExpress.Printing.v13.1.Core.dll", "12/2/2023 1:38 PM", ext, "2,311 KB"],
  ["dll", "DevExpress.RichEdit.v13.1.Core.dll", "12/2/2023 1:38 PM", ext, "5,067 KB"],
  ["dll", "DevExpress.Web.v13.1.dll", "12/2/2023 1:39 PM", ext, "7,017 KB"],
  ["dll", "EntityFramework.dll", "1/26/2024 10:40 AM", ext, "5,075 KB"],
  ["dll", "EntityFramework.SqlServer.dll", "1/26/2024 10:39 AM", ext, "607 KB"],
  ["dll", "eTeams.Helper.dll", "2/19/2024 9:40 AM", ext, "63 KB"],
  ["dll", "eTeamsService.DataTransformObject.dll", "2/19/2024 9:26 AM", ext, "53 KB"],
];

const menuTop = [
  ["System Set-Up & Admin", 188], ["Student", 94], ["Lecturer", 96], ["Facility", 89], ["Client", 81], ["Funding", 94],
  ["Template", 103], ["Course", 88], ["Schedule", 101], ["Enrolment", 108], ["Billing & Collection", 160], ["Job Admin", 110],
  ["Reports", 92], ["Certificate", 110], ["Evaluation", 109], ["Recruitment Agency", 169],
];

const menuBottom = [
  ["LCD", 68], ["Courseware", 108], ["Payment Advice", 152], ["E-Attendance", 127], ["SkillsFuture Credit", 157],
  ["RPL (Questionnaire)", 169], ["Discount", 100], ["PSEA", 66],
];

const heads = [
  ["Enr #", true], ["Enr Date", true], ["Sponsorship"], ["Client"], ["Student Name"], ["ID #"], ["Email"],
  ["Billing Status"], ["Payment Status"], ["Enr Status"], ["Passport #"],
];

const filters = [
  [120], [120, true], [90], [169], [120], [90], [120], [140, true], [140, true], [100], [90], [100],
];

const rows = [
  [31, "E24000021", "19-Feb-24", "(Jasxxxx", "S0124682H", "mail@email.com", "Fully Billed", "Cancelled A/F Billing", ""],
  [58, "E24000020", "17-Feb-24", "(Jasxxxx", "S0124682H", "mail@email.com", "Fully Billed", "Enrolled", ""],
  [58, "E24000020", "17-Feb-24", "(Jasxxxx", "S0124682H", "mail@email.com", "Fully Billed", "Enrolled", ""],
  [32, "E24000019", "09-Feb-24", "A JAxxxx", "S8528874A", "mail@email.com", "Not Billed", "Enrolled", ""],
  [32, "E24000018", "09-Feb-24", "Riley Le", "1111111", "riley.le@avepoint.com", "Fully Billed", "Enrolled", "1111111"],
  [21, "E24000017", "07-Feb-24", "(Venxxxx", "S7339895I", "mail@email.com", "Fully Billed", "Enrolled", ""],
];

const browserTabs = [
  ["jira", "[NPS-500] RE: E23006297 - unabl"],
  ["team", "eTeams // Education & Training e"],
  ["doc", "Could not load file or assembly 'N"],
  ["team", "eTeams // Education & Training e", true],
  ["team", "eTeams // Education & Training e"],
  ["team", "eTeams // Education & Training e"],
];

/* ---------- bits ---------- */

const CalendarIcon = () => (
  <svg width="24" height="17" viewBox="0 0 24 17">
    <rect width="24" height="17" fill="#f2642f" />
    <rect x="2" y="2" width="20" height="13" fill="#fff" />
    <rect x="2" y="2" width="20" height="4" fill="#4a80c8" />
    <path d="M2 9h20M2 12h20M8 6v9M14 6v9" stroke="#bbb" strokeWidth=".7" />
    <rect x="9" y="10" width="4" height="2" fill="#f2b02f" />
  </svg>
);

const FilterPin = () => (
  <svg width="10" height="19" viewBox="0 0 10 19">
    <circle cx="5" cy="5" r="4.500" fill="#999" stroke="#666" />
    <circle cx="5" cy="4" r="1.500" fill="#333" />
    <path d="M5 9v9" stroke="#777" strokeWidth="2" />
  </svg>
);

const HeadCircle = () => (
  <svg width="19" height="19" viewBox="0 0 19 19">
    <circle cx="9.500" cy="9.500" r="9" fill="#8c8c8c" stroke="#c8c8c8" />
    <path d="M5.500 7.500l4 5 4-5" fill="none" stroke="#fff" strokeWidth="1.300" />
  </svg>
);

const Crumbs = [
  ["This PC", 20],
  ["Local Disk (C:)", 19],
  ["_PublishWeb", 19],
  ["TMSAPI_Dev_20240219_100953", 19],
  ["bin", 19],
];

const ChevronSmall = () => <Line d="M8 5l5 5-5 5" size={14} w={1.800} c="#777" />;

const ExplorerWindow = () => (
  <Explorer>
    <TitleBar>
      <Folder w={13} h={20} />
      <TitleSep $l={11} $r={18} />
      <svg width="16" height="21" viewBox="0 0 16 21">
        <path d="M.5.5h11l4 4v16H.5z" fill="#fff" stroke="#9c9c9c" />
        <path d="M4 11l3 4 5-8" fill="none" stroke="#e8501e" strokeWidth="1.500" />
      </svg>
      <TitleGap $w={17} />
      <Folder w={13} h={20} />
      <TitleGap $w={16} />
      <svg width="10" height="12" viewBox="0 0 10 12">
        <path d="M1 2h8" stroke="#222" />
        <path d="M1 5h8L5 10z" fill="#222" />
      </svg>
      <TitleSep $l={11} $r={8} />
      <span>bin</span>
      <WindowButtons>
        <WinButton $w={76}>
          <Line d="M4 10h12" size={15} c="#333" />
        </WinButton>
        <WinButton $w={76}>
          <Line d="M3 6h11v11H3zM6 6V3h11v11h-3" size={15} c="#333" />
        </WinButton>
        <WinButton $w={67}>
          <Line d="M3 3l14 14M17 3L3 17" size={15} c="#333" />
        </WinButton>
      </WindowButtons>
    </TitleBar>
    <RibbonTabs>
      <RibbonTab $file $w={84}>File</RibbonTab>
      <RibbonTab $w={82}>Home</RibbonTab>
      <RibbonTab $w={81}>Share</RibbonTab>
      <RibbonTab $w={76}>View</RibbonTab>
    </RibbonTabs>
    <AddressRow>
      <NavArrows>
        <Line d="M18 10H3M9 4l-6 6 6 6" size={26} w={1.500} c="#666" />
        <Line d="M2 10h15M11 4l6 6-6 6" size={26} w={1.500} c="#ccc" />
        <Line d="M5 8l5 5 5-5" size={12} w={2} c="#777" />
        <Line d="M10 19V2M4 8l6-6 6 6" size={26} w={1.300} c="#666" />
      </NavArrows>
      <AddressBox $w={1507} $mr={10}>
        <Folder />
        <Chevron $ml={21}><ChevronSmall /></Chevron>
        {Crumbs.map(([text, ml], i) => (
          <React.Fragment key={text}>
            <Crumb $ml={i === 0 ? 6 : 5}>{text}</Crumb>
            <Chevron $ml={ml - 5}><ChevronSmall /></Chevron>
          </React.Fragment>
        ))}
        <AddressEnd>
          <Line d="M5 8l5 5 5-5" size={12} w={1.800} c="#666" />
          <Line d="M15 5a7 7 0 1 0 2 5M15 1v4h-4" size={20} w={1.200} c="#555" />
        </AddressEnd>
      </AddressBox>
      <AddressBox $w={225}>
        <Chevron $ml={30}>
          <Line d="M8 2a6 6 0 1 1 0 12A6 6 0 0 1 8 2zM4 13l-3 5" size={18} c="#666" />
        </Chevron>
        <SearchHint>Search bin</SearchHint>
      </AddressBox>
    </AddressRow>
    <Panes>
      <NavPane>
        {quick.map(([icon, label, root, pinned]) => (
          <NavRow key={label} $root={root}>
            <NavIcon $root={root}><NavGlyph kind={icon} /></NavIcon>
            {label}
            {pinned && <NavPin><Pin /></NavPin>}
          </NavRow>
        ))}
        <NavRow $root $top><NavIcon $root><NavGlyph kind="cloud" /></NavIcon>OneDrive</NavRow>
        <NavRow $root $top><NavIcon $root><NavGlyph kind="cloud" /></NavIcon>OneDrive</NavRow>
        <NavRow $root $top><NavIcon $root><NavGlyph kind="pc" /></NavIcon>This PC</NavRow>
        <NavRow><NavIcon><NavGlyph kind="cube" /></NavIcon>3D Objects</NavRow>
        {places.map(([icon, label]) => (
          <NavRow key={label}>
            <NavIcon><NavGlyph kind={icon} /></NavIcon>
            {label}
          </NavRow>
        ))}
        <NavRow $selected><NavIcon><NavGlyph kind="disk" /></NavIcon>Local Disk (C:)</NavRow>
        <NavRow $root $top><NavIcon $root><NavGlyph kind="net" /></NavIcon>Network</NavRow>
      </NavPane>
      <List>
        <HeaderRow>
          <HeaderCell $pl={20}>
            <Check />
            Name
            <SortMark><Line d="M4 12l6-6 6 6" size={14} w={1} c="#777" /></SortMark>
          </HeaderCell>
          <HeaderCell>Date modified</HeaderCell>
          <HeaderCell>Type</HeaderCell>
          <HeaderCell>Size</HeaderCell>
        </HeaderRow>
        <Rows>
          {files.map(([kind, name, date, type, size]) => (
            <FileRow key={name}>
              <NameCell>
                <NameIcon><FileGlyph kind={kind} /></NameIcon>
                {name}
              </NameCell>
              <Muted $size={15.5}>{date}</Muted>
              <Muted>{type}</Muted>
              <Muted $align="right" $size={15.5}>{size}</Muted>
            </FileRow>
          ))}
        </Rows>
        <Watermark>
          <WatermarkTitle>Activate Windows</WatermarkTitle>
          Go to Settings to activate Windows.
        </Watermark>
        <ScrollTrack>
          <ScrollArrow><Line d="M3 13l7-7 7 7" size={15} w={2} c="#555" /></ScrollArrow>
          <ScrollThumb />
          <ScrollArrow $down><Line d="M3 7l7 7 7-7" size={15} w={2} c="#555" /></ScrollArrow>
        </ScrollTrack>
      </List>
    </Panes>
    <StatusBar>
      148 items
      <StatusSep />
      <ViewToggle $on $ml={1732}>
        <Line d="M2 3h3v3H2zM2 8h3v3H2zM2 13h3v3H2zM8 4h10M8 9h10M8 14h10" size={22} c="#555" />
      </ViewToggle>
      <ViewToggle $ml={1}><NavGlyph kind="pic" /></ViewToggle>
    </StatusBar>
  </Explorer>
);

const BrowserWindow = () => (
  <Browser>
    <TabStrip>
      <Profile>
        <Avatar>RL</Avatar>
        Sign in
      </Profile>
      <StripIcon $w={39}>
        <Line d="M4 6l5-3 4 1v12l-5 2-4-3zM8 5v12M13 5l3 2v10l-3 1" size={20} />
      </StripIcon>
      <StripIcon $w={44}>
        <Line d="M5 3h10a2 2 0 0 1 2 2v10a2 2 0 0 1-2 2H5a2 2 0 0 1-2-2V5a2 2 0 0 1 2-2zM3 7h14" size={19} w={1.500} />
      </StripIcon>
      <StripIcon $w={2}><StripSep /></StripIcon>
      {browserTabs.map(([icon, title, active], i) => (
        <Tab key={i} $active={active} $plain={active || i === 2}>
          <TabIcon>
            {icon === "team" && <Favicon />}
            {icon === "jira" && (
              <svg width="16" height="24" viewBox="0 0 16 24">
                <path d="M8 0l8 12-8 12-8-12z" fill="#2684ff" />
                <path d="M8 9l2 3-2 3-2-3z" fill="#fff" />
              </svg>
            )}
            {icon === "doc" && <Line d="M5 2h7l4 4v12H5zM12 2v4h4" size={22} c="#333" />}
          </TabIcon>
          <TabTitle>{title}</TabTitle>
          <Line d="M4 4l12 12M16 4L4 16" size={12} w={1.800} c="#333" />
        </Tab>
      ))}
      <StripIcon $w={34}><Line d="M10 2v16M2 10h16" size={18} w={1.400} /></StripIcon>
      <WindowButtons>
        <WinButton $w={46}><Line d="M4 10h12" size={14} c="#777" /></WinButton>
        <WinButton $w={46}><Line d="M4 6h10v11H4zM7 6V3h9v11h-2" size={14} c="#777" /></WinButton>
        <WinButton $w={46}><Line d="M3 3l14 14M17 3L3 17" size={14} c="#777" /></WinButton>
      </WindowButtons>
    </TabStrip>
    <Toolbar>
      <ToolSlot $w={52}><Line d="M18 10H3M9 4l-6 6 6 6" size={20} /></ToolSlot>
      <ToolSlot $w={48}><Line d="M15 5a7 7 0 1 0 2 5M15 1v4h-4" size={20} /></ToolSlot>
      <Omnibox>
        <svg width="16" height="15" viewBox="0 0 16 15">
          <path d="M8 0l8 15H0z" fill="#666" />
          <path d="M8 5v5M8 11.500v2" stroke="#fff" strokeWidth="1.500" />
        </svg>
        <NotSecure>Not secure</NotSecure>
        <OmniSep />
        <Host>ncss.prodcopylocal.eteams.com.sg</Host>
        <PathPart>/TMS/Enrolment/ProcessEnrolmentModule.aspx</PathPart>
        <OmniEnd>
          <Line d="M2 17l5-13 4 13M4 12h6M13 3c2 1 2 3 1 5M15 1c3 2 3 6 2 8" size={18} w={1} c="#777" />
          <Line d="M10 2l2.500 5.500 5.500.500-4 4 1 6-5-3-5 3 1-6-4-4 5.500-.500z" size={22} w={1.300} c="#444" />
        </OmniEnd>
      </Omnibox>
      <ToolSlot $w={44}><Line d="M6 3h8v14H6zM10 1v18M6 3H3v14h3" size={20} /></ToolSlot>
      <ToolSlot $w={45}><Line d="M7 2l2 5H3l4 4-1 6 5-3M11 6h7M12 10h6M12 14h6" size={20} /></ToolSlot>
      <ToolSlot $w={43}><Line d="M4 5h8v3M4 5v10h4M8 8h9v10H8zM12.500 10v6M10 13h5" size={20} /></ToolSlot>
      <ToolSlot $w={45}>
        <svg width="22" height="26" viewBox="0 0 22 26">
          <path d="M9 1v13M4 10l5 5 5-5M2 19h14" fill="none" stroke="#222" strokeWidth="1.200" />
          <circle cx="16" cy="20" r="5" fill="#1473c9" />
        </svg>
      </ToolSlot>
      <ToolSlot $w={47}>
        <svg width="22" height="24" viewBox="0 0 22 24">
          <path d="M10 18L3 10c-3-4 3-9 7-4 4-5 10 0 7 4zM4 10h4l2-3 2 5 2-2h3" fill="none" stroke="#222" />
          <circle cx="16" cy="18" r="5" fill="#2e9a46" />
        </svg>
      </ToolSlot>
      <ToolSlot $w={41}>
        <svg width="24" height="20" viewBox="0 0 24 20">
          <path d="M1 8h2M6 8h2M11 8h2" stroke="#222" strokeWidth="2" />
          <circle cx="17" cy="13" r="6" fill="#c8232c" />
          <path d="M17 10v6" stroke="#fff" strokeWidth="1.500" />
        </svg>
      </ToolSlot>
      <ToolSlot $w={36}>
        <svg width="26" height="30" viewBox="0 0 26 30">
          <path d="M6 2h14c-4 3-5 10-6 16-1 5-3 10-9 10-4 0-6-3-4-8z" fill="#18a0e8" />
          <path d="M20 2c4 0 6 3 5 8l-3 10c-1 5-4 8-10 8 3-2 4-7 5-12 1-6 1-11 3-14z" fill="#3ed6c0" />
        </svg>
      </ToolSlot>
    </Toolbar>
    <BrowserBody>
      <BrowserMain>
        <FavBar>
          <FavItem $w={119}>
            <Line d="M4 3h12v13M4 3v13h7M8 18l-3-2 3-2M13 18l3-2-3-2" size={18} />
            Import favorites
          </FavItem>
          <FavSep />
          <FavItem $w={150}>
            <svg width="16" height="24" viewBox="0 0 16 24">
              <rect width="7.500" height="11.500" fill="#f25022" />
              <rect x="8.500" width="7.500" height="11.500" fill="#7fba00" />
              <rect y="12.500" width="7.500" height="11.500" fill="#00a4ef" />
              <rect x="8.500" y="12.500" width="7.500" height="11.500" fill="#ffb900" />
            </svg>
            DEV_Training_Plan_...
          </FavItem>
          <FavItem $w={150}><Favicon />eTeams // Educatio...</FavItem>
          <FavItem $w={150}><Favicon />eTeams // Educatio...</FavItem>
        </FavBar>
        <PageShell>
          <Page>
            <PageHead>
              <Brand>
                <BrandTop>
                  <Logo>
                    <LogoE>e</LogoE>
                    <LogoSwoosh width="66" height="30" viewBox="0 0 66 30">
                      <path d="M0 28C10 10 34 0 66 3 40 4 22 12 10 28z" fill="#c3d5e8" />
                    </LogoSwoosh>
                    <LogoRest>Teams</LogoRest>
                  </Logo>
                  <Headline>[..NCSS Production COPY as of 29th Sep 2023..]</Headline>
                </BrandTop>
                <Tagline>Education &amp; Training <b>e-A</b>dministration <b>M</b>anagement <b>S</b>ystem</Tagline>
              </Brand>
              <UserArea>
                <UserInfo>
                  <UserLine>
                    <svg width="27" height="29" viewBox="0 0 27 29">
                      <path d="M9 2c3-3 7-1 7 3 0 3-2 5-1 8s8 5 8 11H4c0-6 7-8 7-11S7 6 9 2z" fill="#8f8f8f" />
                      <rect y="24" width="27" height="4" fill="#a5a5a5" />
                    </svg>
                    <span>Logged on as <b>I-Acxxxx</b></span>
                  </UserLine>
                  <UserLinks>
                    <span>View Profile</span>
                    <LinkBar>|</LinkBar>
                    <span>Change Password</span>
                  </UserLinks>
                </UserInfo>
                <TopButton $w={75}>
                  <svg width="26" height="34" viewBox="0 0 26 34">
                    <rect width="26" height="34" fill="#e4e4e2" />
                    <rect width="5" height="34" fill="#9f9f9d" />
                    <path d="M19 0h4v12l-2-2-2 2z" fill="#8f8f8d" />
                  </svg>
                </TopButton>
                <TopButton $w={77}>
                  <svg width="30" height="34" viewBox="0 0 30 34">
                    <path d="M15 2a13 12 0 1 1-6 22l-5 5 2-8A13 12 0 0 1 15 2z" fill="#e6e6e4" />
                  </svg>
                </TopButton>
                <TopButton $w={122}>
                  <svg width="32" height="36" viewBox="0 0 32 36">
                    <ellipse cx="16" cy="18" rx="15" ry="17" fill="#fff" stroke="#c2203a" strokeWidth="3" />
                    <ellipse cx="16" cy="18" rx="10" ry="12" fill="#d8324e" />
                    <rect x="14.500" y="10" width="3" height="14" fill="#fff" />
                  </svg>
                  Logout
                </TopButton>
              </UserArea>
            </PageHead>
            <MainMenu>
              <MenuRow>
                {menuTop.map(([label, w]) => (
                  <MenuItem key={label} $w={w}>{label}<MenuArrow /></MenuItem>
                ))}
              </MenuRow>
              <MenuRow>
                {menuBottom.map(([label, w]) => (
                  <MenuItem key={label} $w={w}>{label}<MenuArrow /></MenuItem>
                ))}
              </MenuRow>
            </MainMenu>
            <Frame>
              <FrameTitle>Manage Process Enrolment Module</FrameTitle>
              <DateRow>
                <DateLabel $w={93}>From Enr. Date</DateLabel>
                <DateInput>01-Feb-2024<CalendarIcon /></DateInput>
                <DateLabel $w={76} $ml={10}>To Enr. Date</DateLabel>
                <DateInput><span /><CalendarIcon /></DateInput>
              </DateRow>
              <ButtonBox>
                <ButtonRow $gap={10}>
                  <Action $w={200}>Withdraw</Action>
                  <Action $w={200}>Cancel</Action>
                  <Action $w={200}>Transfer Schedule</Action>
                  <Action $w={200} $ml={10}>Add Exam</Action>
                  <Action $w={200}>Re-Exam</Action>
                  <Action $w={200} $ml={20}>Toggle Student Pass</Action>
                  <Action $w={200}>Change Funding</Action>
                  <Action $w={239}>Switch</Action>
                </ButtonRow>
                <ButtonRow $gap={10} $top={12} $pl={30}>
                  <Action $w={250}>Print Letter Of Offer</Action>
                  <Action $w={250}>Print Student Contract</Action>
                  <Action $w={300} $ml={10}>Generate Misc. Fees</Action>
                  <Action $w={240}>Link FPS</Action>
                  <Action $w={240}>Send Notification</Action>
                  <Action $w={240}>Replace</Action>
                </ButtonRow>
                <ButtonRow $top={8}>
                  <Action $w={240}>Transfer Result / Attendance</Action>
                </ButtonRow>
                <ButtonRow $gap={7} $top={12} $pr={20}>
                  <Action $w={250}>Refresh Summaries</Action>
                  <Action $w={250}>Select All</Action>
                  <Action $w={250}>Unselect All</Action>
                </ButtonRow>
                <ButtonRow $gap={7} $top={15}>
                  <Action $w={250}>Export</Action>
                  <FormatSelect>Xlsx<OrangeDrop><DropMark /></OrangeDrop></FormatSelect>
                  <ExportDetail><TickBox />Export detail rows (if applicable)</ExportDetail>
                </ButtonRow>
              </ButtonBox>
              <GridFrame>
                <GridBody>
                  <GridHead>
                    <GridHeadCell $first><HeadTick /></GridHeadCell>
                    {heads.map(([label, sorted]) => (
                      <GridHeadCell key={label}>
                        {label}
                        {sorted && <HeadSort />}
                        <HeadMenu><HeadCircle /></HeadMenu>
                      </GridHeadCell>
                    ))}
                    <GridHeadCell>Student Pass Status</GridHeadCell>
                  </GridHead>
                  <FilterRow>
                    <FilterCell $first />
                    {filters.map(([w, combo], i) => (
                      <FilterCell key={i}>
                        <FilterInput $w={w} $combo={combo}>
                          {combo && <OrangeDrop><DropMark /></OrangeDrop>}
                        </FilterInput>
                        {!combo && i < 11 && <FilterPin />}
                      </FilterCell>
                    ))}
                  </FilterRow>
                  {rows.map(([h, no, date, student, id, mail, billing, status, passport], i) => (
                    <DataRow key={i} $h={h}>
                      <DataCell $first><RowTick /></DataCell>
                      <DataCell><CellLink>{no}</CellLink></DataCell>
                      <DataCell>{date}</DataCell>
                      <DataCell $center>Individual</DataCell>
                      <DataCell />
                      <DataCell><CellLink>{student}</CellLink></DataCell>
                      <DataCell>{id}</DataCell>
                      <DataCell>{mail}</DataCell>
                      <DataCell>{billing}</DataCell>
                      <DataCell>Not Paid</DataCell>
                      <DataCell>{status}</DataCell>
                      <DataCell>{passport}</DataCell>
                      <DataCell />
                    </DataRow>
                  ))}
                </GridBody>
                <GridScroll>
                  <GridTri />
                  <GridTri $down />
                </GridScroll>
              </GridFrame>
            </Frame>
          </Page>
          <PageScroll>
            <Tri />
            <PageThumb />
            <Tri $down />
          </PageScroll>
        </PageShell>
      </BrowserMain>
      <SideRail>
        <RailSlot>
          <svg width="26" height="26" viewBox="0 0 26 26" fill="none">
            <circle cx="11" cy="10" r="7" stroke="#7a8a99" strokeWidth="3" fill="#cfe4f4" />
            <path d="M16 16l7 8" stroke="#b04fd0" strokeWidth="3" />
          </svg>
        </RailSlot>
        <RailSlot $h={46}>
          <svg width="24" height="28" viewBox="0 0 24 28" fill="none">
            <path d="M12 3a11 11 0 1 1-8 19" stroke="#3d6fd8" strokeWidth="5" />
            <path d="M12 3A11 11 0 0 0 4 22" stroke="#b356d8" strokeWidth="5" />
          </svg>
        </RailSlot>
        <RailSlot $h={38}>
          <svg width="24" height="26" viewBox="0 0 24 26">
            <rect x="7" y="2" width="16" height="22" fill="#28a8ea" />
            <rect x="0" y="6" width="14" height="15" fill="#0f62b0" />
            <circle cx="7" cy="13.500" r="3.500" fill="none" stroke="#fff" strokeWidth="1.500" />
          </svg>
        </RailSlot>
        <RailSep $m="10px 0 12px" />
        <RailSlot><Line d="M10 3v14M3 10h14" size={22} w={1.200} /></RailSlot>
        <RailSep $m="659px 0 2px" />
        <RailSlot><Line d="M3 3h14v14H3zM12 3v14" size={22} w={1.300} /></RailSlot>
        <RailSlot><Line d="M10 4H4v13h11v-5M10 11l7-8M13 3h4v4" size={22} w={1.200} /></RailSlot>
        <RailSlot><Line d="M10 2l2 2.500 3-.500 1 3 3 1-1 3 1 3-3 1-1 3-3-.500L10 20l-2-2.500-3 .500-1-3-3-1 1-3-1-3 3-1 1-3 3 .500zM10 8a3 3 0 1 1 0 6 3 3 0 0 1 0-6z" size={24} w={1.100} /></RailSlot>
      </SideRail>
    </BrowserBody>
  </Browser>
);

export default function App() {
  return (
    <>
      <Global />
      <Desktop>
        <Half>
          <ExplorerWindow />
          <Taskbar $h={60}>
            <Slot $w={72}><AppIcon name="start" size={30} /></Slot>
            <Slot $w={74}><AppIcon name="search" size={36} /></Slot>
            <Slot $w={74}><AppIcon name="task" size={28} /></Slot>
            <AppSlots slot={75} icon={36} inset={7} />
            <Tray $ml={48}>
              <svg width="36" height="30" viewBox="0 0 36 30" fill="none" stroke="#fff" strokeWidth="2">
                <rect x="1" y="1" width="34" height="28" rx="2" />
                <path d="M5 6h26M6 11h10v10H6zM20 12h10M20 17h10M6 25h24" />
              </svg>
              <Temp>28°C</Temp>
              <Slot $w={36}><Line d="M3 14l7-8 7 8" size={22} w={1.500} c="#fff" /></Slot>
              <Slot $w={36}>
                <svg width="28" height="34" viewBox="0 0 28 34" fill="none" stroke="#fff" strokeWidth="1.500">
                  <path d="M3 6l17-4v28L3 26z" />
                  <circle cx="19" cy="26" r="6" fill="#e81123" stroke="none" />
                </svg>
              </Slot>
              <Slot $w={36}>
                <svg width="26" height="32" viewBox="0 0 26 32" fill="none" stroke="#fff" strokeWidth="1.500">
                  <rect x="1" y="2" width="24" height="20" />
                  <path d="M7 2v8H1M13 22v7M7 29h12" />
                </svg>
              </Slot>
              <Slot $w={36}>
                <svg width="24" height="28" viewBox="0 0 24 28" fill="none" stroke="#fff" strokeWidth="1.300">
                  <path d="M2 10h4l6-7v22l-6-7H2zM15 10c2 2 2 6 0 8M18 6c4 4 4 12 0 16" />
                </svg>
              </Slot>
              <Clock $w={104} $size={17} $gap={8}>
                <span>1:04 PM</span>
                <span>2/19/2024</span>
              </Clock>
              <Slot $w={60}>
                <svg width="24" height="38" viewBox="0 0 24 38">
                  <path d="M0 0h24v26H8l-4 6v-6H0z" fill="#fff" />
                  <path d="M4 6h16M4 11h16M4 16h16" stroke="#333" />
                </svg>
                <Badge>2</Badge>
              </Slot>
            </Tray>
          </Taskbar>
        </Half>
        <Half>
          <BrowserWindow />
          <Taskbar $h={43}>
            <Slot $w={47}><AppIcon name="start" size={22} /></Slot>
            <Slot $w={49}><AppIcon name="search" size={26} /></Slot>
            <Slot $w={50}><AppIcon name="task" size={20} /></Slot>
            <AppSlots slot={49} icon={24} inset={4} />
            <Tray>
              <Clock $w={64} $size={12.500} $gap={3}>
                <span>1:04 PM</span>
                <span>2/19/2024</span>
              </Clock>
            </Tray>
          </Taskbar>
        </Half>
      </Desktop>
    </>
  );
}
